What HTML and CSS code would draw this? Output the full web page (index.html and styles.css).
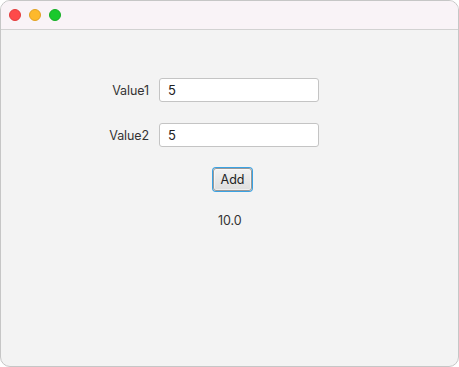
FILE: index.html
```html
<!DOCTYPE html>
<html lang="en">

<head>
   <meta charset="UTF-8" />
   <meta name="viewport" content="width=device-width, initial-scale=1.0" />
   <title>Adder</title>
   <link rel="stylesheet" href="styles.css">
</head>

<body>
   <div class="window">
      <div class="titlebar">
         <span class="light red"></span>
         <span class="light yellow"></span>
         <span class="light green"></span>
      </div>
      <div class="content">
         <div class="form">
            <label for="value1">Value1</label>
            <input type="text" id="value1" value="5">
            <label for="value2">Value2</label>
            <input type="text" id="value2" value="5">
         </div>
         <button type="button" class="add">Add</button>
         <p class="result">10.0</p>
      </div>
   </div>
</body>

</html>
```

FILE: styles.css
```css
*,
*::before,
*::after {
   margin: 0;
   padding: 0;
   box-sizing: border-box;
}

body {
   font-family: Inter, "Noto Sans", sans-serif;
   font-size: 12.5px;
   letter-spacing: -0.1px;
   color: #222;
   background: #fff;
   width: 459px;
   height: 367px;
   overflow: hidden;
}

.window {
   width: 459px;
   height: 367px;
   border: 1px solid #c6c6c6;
   border-radius: 10px;
   overflow: hidden;
   background: #f3f3f3;
   display: flex;
   flex-direction: column;
}

.titlebar {
   height: 29px;
   flex: none;
   background: #f9f3f7;
   border-bottom: 1px solid #d2d2d2;
   display: flex;
   align-items: center;
   gap: 8px;
   padding-left: 8px;
}

.light {
   width: 12px;
   height: 12px;
   border-radius: 50%;
}

.red {
   background: #fe4a4a;
   border: 1px solid #e23c3c;
}

.yellow {
   background: #fdb92c;
   border: 1px solid #e0a122;
}

.green {
   background: #19c92d;
   border: 1px solid #14ad24;
}

.content {
   flex: 1;
   display: flex;
   flex-direction: column;
   align-items: flex-start;
   padding-top: 48px;
}

.form {
   display: grid;
   grid-template-columns: 40px 160px;
   column-gap: 10px;
   row-gap: 21px;
   margin-left: 108px;
   align-items: center;
}

.form label {
   text-align: right;
   white-space: nowrap;
   color: #333;
}

.form input {
   height: 24px;
   width: 160px;
   border: 1px solid #c4c4c4;
   border-radius: 3px;
   background: #fff;
   padding: 0 8px;
   font: inherit;
   font-size: 13px;
   color: #222;
   outline: none;
}

.add {
   margin-top: 21px;
   margin-left: 212px;
   width: 39px;
   height: 23px;
   font: inherit;
   color: #222;
   border: 1px solid #999;
   border-radius: 3px;
   background: linear-gradient(#f2f2f2, #dedede);
   box-shadow: 0 0 0 1px #3aa2e3, inset 0 0 0 1px #ffffff80;
}

.result {
   margin-top: 22px;
   margin-left: 217px;
   color: #333;
}
```
